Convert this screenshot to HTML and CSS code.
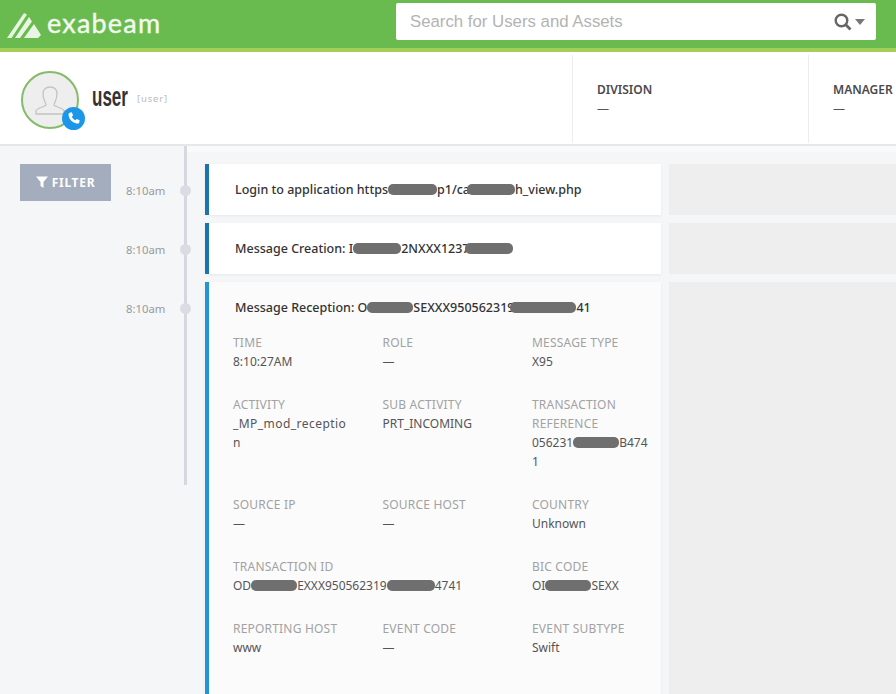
FILE: index.html
```html
<!DOCTYPE html>
<html lang="en">
<head>
<meta charset="utf-8">
<title>exabeam</title>
<link rel="stylesheet" href="styles.css">
</head>
<body>
<header class="topbar">
  <div class="brand">
    <svg class="brand-mark" viewBox="0 0 36 28" width="36" height="28"><path d="M1 27L18 2L21 3.500L5.500 27ZM9 27L23 6L26 10.500L14 27ZM18 27L28 13L35 24L32 27Z" fill="#e9f5e3"/></svg>
    <span class="brand-name">exabeam</span>
  </div>
  <div class="search">
    <span class="search-text">Search for Users and Assets</span>
    <svg class="search-icon" viewBox="0 0 18 18" width="18" height="18"><circle cx="7.500" cy="7.500" r="5.800" fill="none" stroke="#666" stroke-width="2.400"/><path d="M11.800 11.800L16.500 16.500" stroke="#666" stroke-width="2.800"/></svg>
    <span class="search-caret"></span>
  </div>
</header>
<section class="profile">
  <div class="identity">
    <div class="avatar">
      <svg viewBox="0 0 32 32" width="32" height="32"><path d="M2 30V27C2 24 11 23 12 21C12 19 9 16 9 10C9 5 12 3 16 3C20 3 23 5 23 10C23 16 20 19 20 21C21 23 30 24 30 27V30Z" fill="none" stroke="#c4c4c4" stroke-width="1.300"/></svg>
      <span class="badge"><svg viewBox="0 0 16 16" width="14" height="14"><path d="M3 2L5.500 1.500L7 5L5.500 6.300C6 8 8 10 9.700 10.500L11 9L14.500 10.500L14 13C13.500 14.500 11.500 14.500 10 14C6 13 3 10 2 6C1.500 4.500 1.700 2.700 3 2Z" fill="#fff"/></svg></span>
    </div>
    <span class="user-name">user</span>
    <span class="user-tag">[user]</span>
  </div>
  <div class="stat"><div class="stat-label">DIVISION</div><div class="stat-value">—</div></div>
  <div class="stat"><div class="stat-label">MANAGER</div><div class="stat-value">—</div></div>
</section>
<main class="content">
  <aside class="side">
    <div class="filter"><svg viewBox="0 0 12 12" width="12" height="12"><path d="M0 .500H12L7.500 6V12L4.500 10V6Z" fill="#fff"/></svg>FILTER</div>
  </aside>
  <div class="timeline">
    <div class="row">
      <div class="time">8:10am</div><span class="dot"></span>
      <article class="card card-dark"><h2 class="title">Login to application https<span class="blob b49"></span>p1/ca<span class="blob b48 pull-3"></span>h_view.php</h2></article>
      <div class="panel"></div>
    </div>
    <div class="row">
      <div class="time">8:10am</div><span class="dot"></span>
      <article class="card card-dark"><h2 class="title">Message Creation: I<span class="blob b48"></span>2NXXX1237<span class="blob b48 pull-5"></span></h2></article>
      <div class="panel"></div>
    </div>
    <div class="row row-open">
      <div class="time">8:10am</div><span class="dot"></span>
      <article class="card card-open">
        <h2 class="title">Message Reception: O<span class="blob b46"></span>SEXXX950562319<span class="blob b66 pull-4"></span>41</h2>
        <div class="details">
          <div class="field"><div class="label">TIME</div><div class="value">8:10:27AM</div></div>
          <div class="field"><div class="label">ROLE</div><div class="value">—</div></div>
          <div class="field"><div class="label">MESSAGE TYPE</div><div class="value">X95</div></div>
          <div class="field"><div class="label">ACTIVITY</div><div class="value value-spaced">_MP_mod_receptio<br>n</div></div>
          <div class="field"><div class="label">SUB ACTIVITY</div><div class="value">PRT_INCOMING</div></div>
          <div class="field"><div class="label">TRANSACTION REFERENCE</div><div class="value">056231<span class="blob b46"></span>B474<br>1</div></div>
          <div class="field"><div class="label">SOURCE IP</div><div class="value">—</div></div>
          <div class="field"><div class="label">SOURCE HOST</div><div class="value">—</div></div>
          <div class="field"><div class="label">COUNTRY</div><div class="value">Unknown</div></div>
          <div class="field field-wide"><div class="label">TRANSACTION ID</div><div class="value">OD<span class="blob b46"></span>EXXX950562319<span class="blob b48"></span>4741</div></div>
          <div class="field"><div class="label">BIC CODE</div><div class="value">OI<span class="blob b46"></span>SEXX</div></div>
          <div class="field"><div class="label">REPORTING HOST</div><div class="value">www</div></div>
          <div class="field"><div class="label">EVENT CODE</div><div class="value">—</div></div>
          <div class="field"><div class="label">EVENT SUBTYPE</div><div class="value">Swift</div></div>
        </div>
      </article>
      <div class="panel"></div>
    </div>
  </div>
</main>
</body>
</html>
```
FILE: styles.css
```css
* { box-sizing: border-box; }
html, body { margin: 0; height: 100%; overflow: hidden; }
body { background: #f4f6f8; font-family: "Noto Sans", "Open Sans", sans-serif; font-size: 12px; color: #444; }

.topbar { height: 52px; background: #6abb4f; border-bottom: 4px solid #a3cf58; display: flex; justify-content: space-between; padding: 3px 20px 0 6px; }
.brand { display: flex; align-items: center; height: 38px; gap: 5px; }
.brand-mark { flex: none; margin-top: 6px; }
.brand-name { font-family: Lato, sans-serif; font-size: 27px; font-weight: 400; color: #f2f9ee; letter-spacing: 1.200px; -webkit-text-stroke: .4px #f2f9ee; }
.search { width: 480px; height: 37px; background: #fff; border-radius: 2px; display: flex; align-items: center; padding: 0 11px 0 14px; }
.search-text { flex: 1; font-family: "Liberation Sans", sans-serif; font-size: 16.800px; color: #b3b3b3; }
.search-icon { margin-right: 3px; }
.search-caret { width: 0; height: 0; border: 5.500px solid transparent; border-top: 6px solid #777; border-bottom: 0; }

.profile { height: 94px; background: #fff; border-bottom: 2px solid #e6e7e8; display: flex; padding-top: 3px; overflow: hidden; }
.identity { width: 572px; flex: none; display: flex; align-items: center; padding-left: 21px; }
.avatar { position: relative; width: 58px; height: 58px; flex: none; border: 2.500px solid #86bb69; border-radius: 50%; background: #eeeeef; display: flex; align-items: center; justify-content: center; }
.badge { position: absolute; right: -8px; bottom: -3px; width: 23px; height: 23px; border-radius: 50%; background: #1b96e8; display: flex; align-items: center; justify-content: center; }
.user-name { margin: 0 -21px 4px 13px; display: inline-block; font-family: "Liberation Sans", sans-serif; font-size: 27px; font-weight: 700; color: #333; transform: scaleX(.63); transform-origin: left center; }
.user-tag { margin-left: 9px; margin-bottom: 2px; font-size: 9.500px; letter-spacing: .8px; color: #bbb; }
.stat { width: 236px; flex: none; height: 88px; border-left: 1px solid #eceded; padding: 26px 0 0 24px; }
.stat-label { font-weight: 600; color: #4a4a4a; line-height: 17px; white-space: nowrap; }
.stat-value { line-height: 19px; margin-top: 1px; color: #555; }

.content { display: flex; height: 548px; }
.side { width: 126px; flex: none; padding: 18px 0 0 20px; }
.filter { width: 91px; height: 37px; background: #a3adbd; color: #fff; font-weight: 700; font-size: 12px; letter-spacing: .7px; display: flex; align-items: center; justify-content: center; gap: 4px; padding-bottom: 1px; }
.timeline { flex: 1; padding-top: 18px; position: relative; min-width: 0; }
.timeline::before { content: ""; position: absolute; left: 58px; top: 0; width: 3px; height: 339px; background: #d3d8e1; }
.timeline::after { content: ""; position: absolute; left: 61px; right: 0; top: 0; height: 6px; background: #f9fafa; }
.row { display: flex; margin-bottom: 8px; position: relative; }
.time { width: 40px; flex: none; padding-top: 19px; line-height: 16px; font-size: 11.300px; color: #9a9a9a; white-space: nowrap; }
.dot { width: 11px; height: 11px; flex: none; margin: 21px 14px 0 14px; border-radius: 50%; background: #d9dde3; position: relative; }
.card { width: 456px; flex: none; border-left: 4px solid #1a75ae; background: #fff; box-shadow: 0 1px 3px rgba(0,0,0,.06); padding: 0 10px 0 26px; }
.card-dark { height: 51px; }
.card-open { height: 430px; background: #fbfbfc; border-left-color: #2196d3; padding-left: 24px; }
.title { margin: 0; font-size: 12.500px; font-weight: 500; color: #333; line-height: 19px; padding-top: 16px; white-space: nowrap; }
.card-open .title { padding-left: 2px; }
.panel { width: 227px; flex: none; margin-left: 8px; background: #eeeeee; }
.blob { display: inline-block; height: 11px; background: #6f6f6f; border-radius: 5px; vertical-align: -1px; }
.b46 { width: 46px; }
.b48 { width: 48px; }
.b49 { width: 49px; }
.b66 { width: 66px; }
.pull-3 { margin-left: -3px; }
.pull-4 { margin-left: -4px; }
.pull-5 { margin-left: -5px; }
.details { display: grid; grid-template-columns: 149.500px 149.500px 1fr; row-gap: 24px; margin-top: 16px; }
.field { min-width: 0; }
.field-wide { grid-column: span 2; }
.label { color: #a2a2a2; line-height: 19px; font-size: 12px; letter-spacing: .2px; }
.value { color: #555; line-height: 19px; font-size: 12px; }
.value-spaced { letter-spacing: .45px; }
```
